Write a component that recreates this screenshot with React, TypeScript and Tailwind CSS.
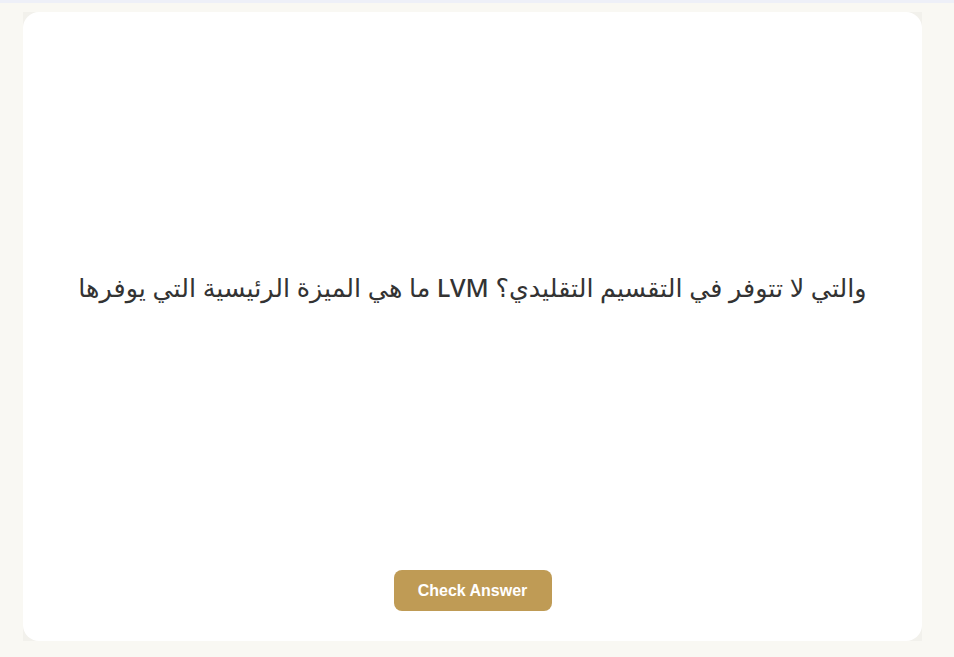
export default function App() {
  return (
    <div className="w-[954px] h-[657px] bg-[#f9f8f3] flex flex-col overflow-hidden">
      <div className="h-[3px] bg-[#eef0f8] shrink-0" />
      <div className="flex-1 pl-[23px] pr-[32px] pt-[9px] pb-[16px] flex">
        <div className="flex-1 bg-[#f2f1ec] flex">
          <div className="flex-1 bg-white rounded-[16px] flex flex-col items-center">
            <div className="flex-1 flex items-center justify-center px-6 w-full pb-[6px]">
              <p
                dir="ltr"
                className="text-center text-[25.4px] font-medium text-[#333333] leading-[1.4]"
                style={{ fontFamily: '"Noto Sans", "DejaVu Sans", sans-serif' }}
              >
                ما هي الميزة الرئيسية التي يوفرها LVM والتي لا تتوفر في التقسيم التقليدي؟
              </p>
            </div>
            <button
              className="w-[158px] h-[41px] rounded-[8px] bg-[#bf9b55] text-white text-[16px] font-bold mb-[30px]"
              style={{ fontFamily: '"Liberation Sans", Arial, sans-serif' }}
            >
              Check Answer
            </button>
          </div>
        </div>
      </div>
    </div>
  );
}
